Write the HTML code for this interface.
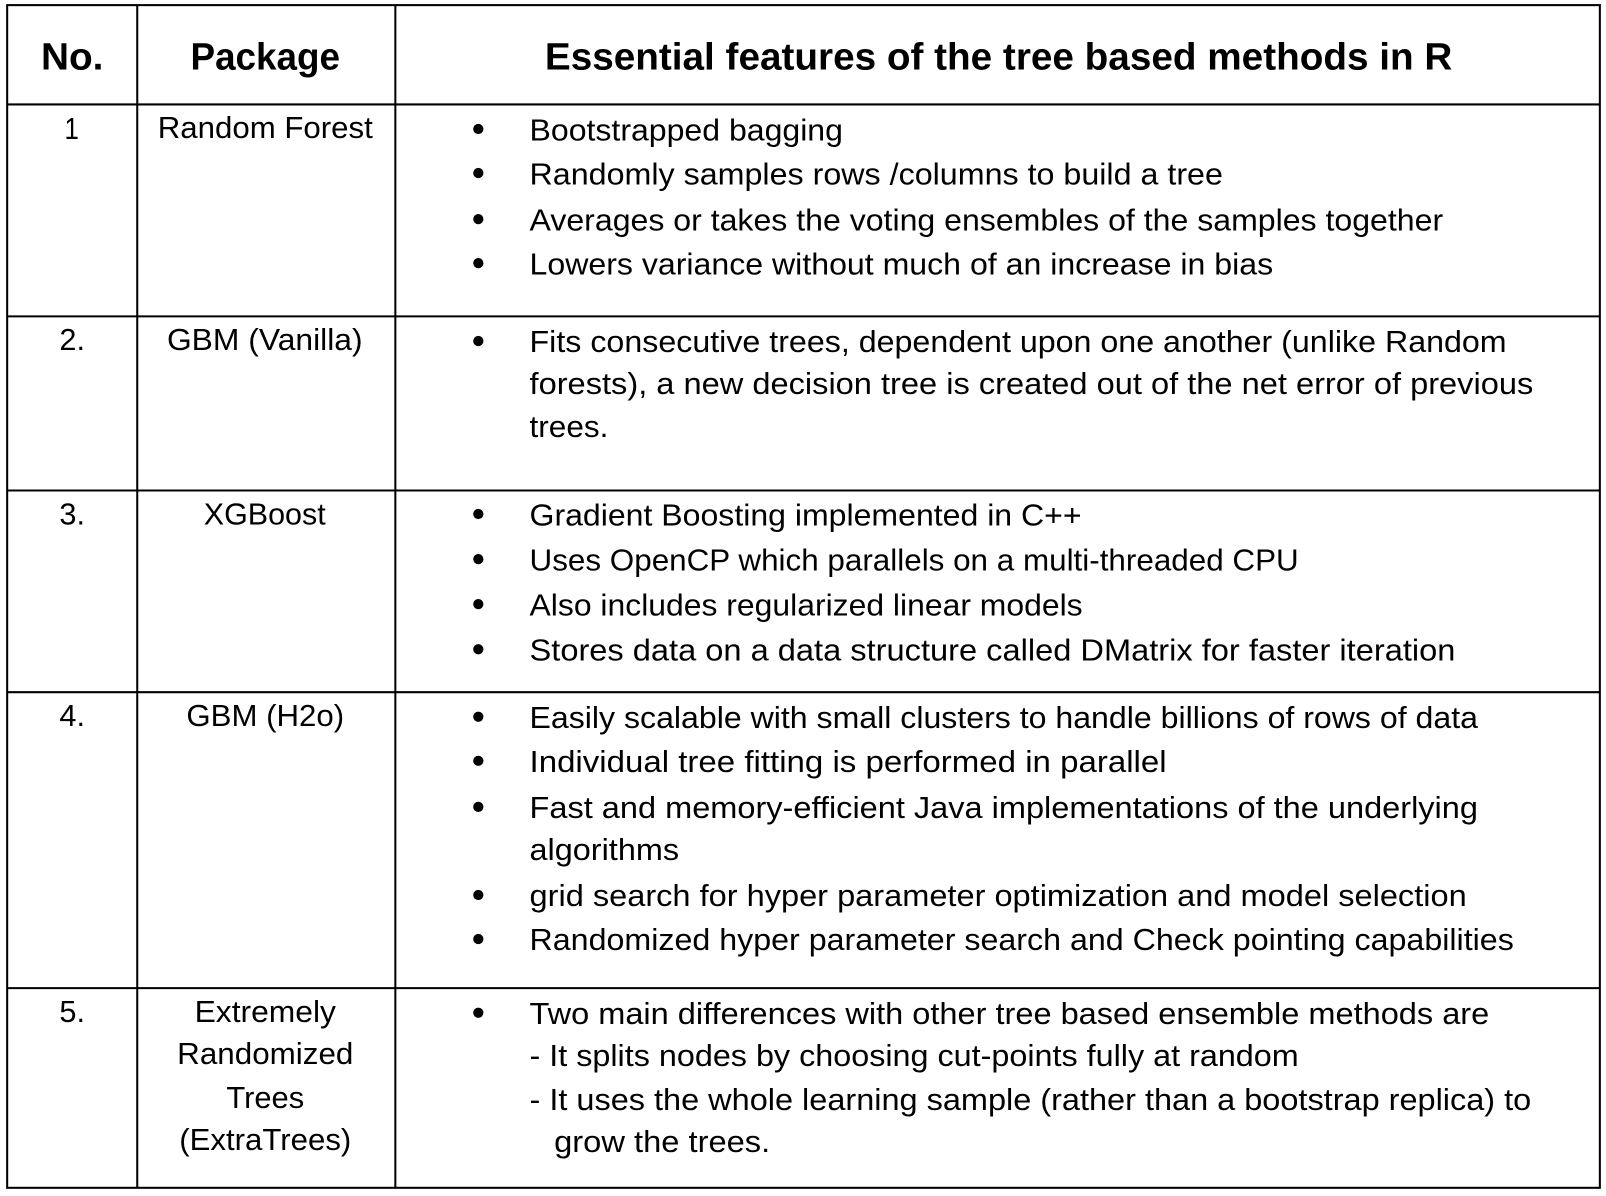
<!DOCTYPE html>
<html><head><meta charset="utf-8"><style>html,body{margin:0;padding:0;background:#fff}svg{display:block}</style></head><body>
<svg width="1606" height="1196" viewBox="0 0 1568 1168" preserveAspectRatio="none" xmlns="http://www.w3.org/2000/svg">
<rect width="1568" height="1168" fill="#fff"/>
<g stroke="#000" stroke-width="2" fill="none">
<rect x="7" y="5" width="1555" height="1155"/>
<line x1="134" y1="5" x2="134" y2="1160"/>
<line x1="386" y1="5" x2="386" y2="1160"/>
<line x1="7" y1="102" x2="1562" y2="102"/>
<line x1="7" y1="309" x2="1562" y2="309"/>
<line x1="7" y1="479" x2="1562" y2="479"/>
<line x1="7" y1="676" x2="1562" y2="676"/>
<line x1="7" y1="965" x2="1562" y2="965"/>
</g>
<g font-family="Liberation Sans, sans-serif" font-weight="bold" font-size="37" fill="#000" lengthAdjust="spacingAndGlyphs">
<text x="40" y="68" textLength="61" lengthAdjust="spacingAndGlyphs">No.</text>
<text x="186" y="68" textLength="146" lengthAdjust="spacingAndGlyphs">Package</text>
<text x="532" y="68" textLength="886" lengthAdjust="spacingAndGlyphs">Essential features of the tree based methods in R</text>
</g>
<g font-family="Liberation Sans, sans-serif" font-size="30" fill="#000">
<text x="63" y="136" textLength="14" lengthAdjust="spacingAndGlyphs">1</text>
<text x="58" y="342" textLength="25" lengthAdjust="spacingAndGlyphs">2.</text>
<text x="58" y="512" textLength="25" lengthAdjust="spacingAndGlyphs">3.</text>
<text x="58" y="709" textLength="25" lengthAdjust="spacingAndGlyphs">4.</text>
<text x="58" y="998" textLength="25" lengthAdjust="spacingAndGlyphs">5.</text>
<text x="154" y="135" textLength="210" lengthAdjust="spacingAndGlyphs">Random Forest</text>
<text x="163" y="342" textLength="191" lengthAdjust="spacingAndGlyphs">GBM (Vanilla)</text>
<text x="199" y="512" textLength="119" lengthAdjust="spacingAndGlyphs">XGBoost</text>
<text x="182" y="709" textLength="154" lengthAdjust="spacingAndGlyphs">GBM (H2o)</text>
<text x="190" y="998" textLength="138" lengthAdjust="spacingAndGlyphs">Extremely</text>
<text x="173" y="1039" textLength="172" lengthAdjust="spacingAndGlyphs">Randomized</text>
<text x="221" y="1082" textLength="76" lengthAdjust="spacingAndGlyphs">Trees</text>
<text x="175" y="1123" textLength="168" lengthAdjust="spacingAndGlyphs">(ExtraTrees)</text>

<text x="517" y="137" textLength="306" lengthAdjust="spacingAndGlyphs">Bootstrapped bagging</text>
<text x="517" y="180" textLength="677" lengthAdjust="spacingAndGlyphs">Randomly samples rows /columns to build a tree</text>
<text x="517" y="225" textLength="892" lengthAdjust="spacingAndGlyphs">Averages or takes the voting ensembles of the samples together</text>
<text x="517" y="268" textLength="726" lengthAdjust="spacingAndGlyphs">Lowers variance without much of an increase in bias</text>
<text x="517" y="344" textLength="954" lengthAdjust="spacingAndGlyphs">Fits consecutive trees, dependent upon one another (unlike Random</text>
<text x="517" y="385" textLength="980" lengthAdjust="spacingAndGlyphs">forests), a new decision tree is created out of the net error of previous</text>
<text x="517" y="427" textLength="77" lengthAdjust="spacingAndGlyphs">trees.</text>
<text x="517" y="513" textLength="539" lengthAdjust="spacingAndGlyphs">Gradient Boosting implemented in C++</text>
<text x="517" y="557" textLength="751" lengthAdjust="spacingAndGlyphs">Uses OpenCP which parallels on a multi-threaded CPU</text>
<text x="517" y="601" textLength="540" lengthAdjust="spacingAndGlyphs">Also includes regularized linear models</text>
<text x="517" y="645" textLength="904" lengthAdjust="spacingAndGlyphs">Stores data on a data structure called DMatrix for faster iteration</text>
<text x="517" y="711" textLength="926" lengthAdjust="spacingAndGlyphs">Easily scalable with small clusters to handle billions of rows of data</text>
<text x="517" y="754" textLength="622" lengthAdjust="spacingAndGlyphs">Individual tree fitting is performed in parallel</text>
<text x="517" y="799" textLength="926" lengthAdjust="spacingAndGlyphs">Fast and memory-efficient Java implementations of the underlying</text>
<text x="517" y="840" textLength="146" lengthAdjust="spacingAndGlyphs">algorithms</text>
<text x="517" y="885" textLength="915" lengthAdjust="spacingAndGlyphs">grid search for hyper parameter optimization and model selection</text>
<text x="517" y="928" textLength="961" lengthAdjust="spacingAndGlyphs">Randomized hyper parameter search and  Check pointing capabilities</text>
<text x="517" y="1000" textLength="937" lengthAdjust="spacingAndGlyphs">Two main differences with other tree based ensemble methods are</text>
<text x="517" y="1041" textLength="751" lengthAdjust="spacingAndGlyphs">- It splits nodes by choosing cut-points fully at random</text>
<text x="517" y="1084" textLength="978" lengthAdjust="spacingAndGlyphs">- It uses the whole learning sample (rather than a bootstrap replica) to</text>
<text x="541" y="1125" textLength="211" lengthAdjust="spacingAndGlyphs">grow the trees.</text>
</g>
<g fill="#000">
<circle cx="467" cy="126" r="5"/><circle cx="467" cy="169" r="5"/><circle cx="467" cy="214" r="5"/><circle cx="467" cy="257" r="5"/>
<circle cx="467" cy="333" r="5"/>
<circle cx="467" cy="502" r="5"/><circle cx="467" cy="546" r="5"/><circle cx="467" cy="590" r="5"/><circle cx="467" cy="634" r="5"/>
<circle cx="467" cy="700" r="5"/><circle cx="467" cy="743" r="5"/><circle cx="467" cy="788" r="5"/><circle cx="467" cy="874" r="5"/><circle cx="467" cy="917" r="5"/>
<circle cx="467" cy="989" r="5"/>
</g>
</svg>
</body></html>
